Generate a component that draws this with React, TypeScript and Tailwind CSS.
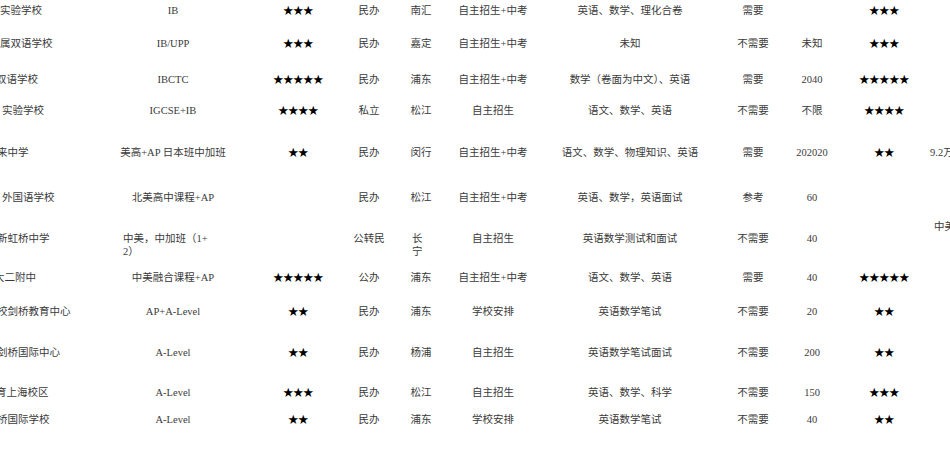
import React from "react";

type Row = {
  h: string;
  name: string;
  nameCls: string;
  course: React.ReactNode;
  courseCls?: string;
  stars: string;
  type: string;
  district: React.ReactNode;
  districtCls?: string;
  admit: string;
  subjects: string;
  interview: string;
  score: string;
  rating: string;
  extra?: string;
  extraCls?: string;
};

const ROWS: Row[] = [
  { h: "h-[33px]", name: "实验学校", nameCls: "ml-0", course: "IB", stars: "★★★", type: "民办", district: "南汇", admit: "自主招生+中考", subjects: "英语、数学、理化合卷", interview: "需要", score: "", rating: "★★★" },
  { h: "h-[36px]", name: "属双语学校", nameCls: "ml-0", course: "IB/UPP", stars: "★★★", type: "民办", district: "嘉定", admit: "自主招生+中考", subjects: "未知", interview: "不需要", score: "未知", rating: "★★★" },
  { h: "h-[31px]", name: "双语学校", nameCls: "-ml-[4px]", course: "IBCTC", stars: "★★★★★", type: "民办", district: "浦东", admit: "自主招生+中考", subjects: "数学（卷面为中文）、英语", interview: "需要", score: "2040", rating: "★★★★★" },
  { h: "h-[42px]", name: "实验学校", nameCls: "ml-[2px]", course: "IGCSE+IB", stars: "★★★★", type: "私立", district: "松江", admit: "自主招生", subjects: "语文、数学、英语", interview: "不需要", score: "不限", rating: "★★★★" },
  { h: "h-[45px]", name: "来中学", nameCls: "-ml-[3px]", course: "美高+AP 日本班中加班", stars: "★★", type: "民办", district: "闵行", admit: "自主招生+中考", subjects: "语文、数学、物理知识、英语", interview: "需要", score: "202020", rating: "★★", extra: "9.2万" },
  { h: "h-[41px]", name: "外国语学校", nameCls: "ml-[2px]", course: "北美高中课程+AP", stars: "", type: "民办", district: "松江", admit: "自主招生+中考", subjects: "英语、数学，英语面试", interview: "参考", score: "60", rating: "" },
  {
    h: "h-[39px]",
    name: "新虹桥中学",
    nameCls: "-ml-[3px]",
    course: (
      <>
        中美，中加班（1+
        <br />
        2）
      </>
    ),
    courseCls: "text-left pl-[5px]",
    stars: "",
    type: "公转民",
    district: (
      <>
        长
        <br />
        宁
      </>
    ),
    districtCls: "text-left pl-[3px]",
    admit: "自主招生",
    subjects: "英语数学测试和面试",
    interview: "不需要",
    score: "40",
    rating: "",
    extra: "中美",
    extraCls: "-mt-[12px] ml-[15px]",
  },
  { h: "h-[34px]", name: "大二附中", nameCls: "-ml-[6px]", course: "中美融合课程+AP", stars: "★★★★★", type: "公办", district: "浦东", admit: "自主招生+中考", subjects: "语文、数学、英语", interview: "需要", score: "40", rating: "★★★★★" },
  { h: "h-[41px]", name: "校剑桥教育中心", nameCls: "-ml-[3px]", course: "AP+A-Level", stars: "★★", type: "民办", district: "浦东", admit: "学校安排", subjects: "英语数学笔试", interview: "不需要", score: "20", rating: "★★" },
  { h: "h-[40px]", name: "剑桥国际中心", nameCls: "-ml-[3px]", course: "A-Level", stars: "★★", type: "民办", district: "杨浦", admit: "自主招生", subjects: "英语数学笔试面试", interview: "不需要", score: "200", rating: "★★" },
  { h: "h-[27px]", name: "育上海校区", nameCls: "-ml-[4px]", course: "A-Level", stars: "★★★", type: "民办", district: "松江", admit: "自主招生", subjects: "英语、数学、科学", interview: "不需要", score: "150", rating: "★★★" },
  { h: "h-[43px]", name: "桥国际学校", nameCls: "-ml-[3px]", course: "A-Level", stars: "★★", type: "民办", district: "浦东", admit: "学校安排", subjects: "英语数学笔试", interview: "不需要", score: "40", rating: "★★" },
];

function Stars({ value }: { value: string }) {
  return <span className="text-black tracking-[-0.5px]">{value}</span>;
}

function TableRow({ r }: { r: Row }) {
  return (
    <div className={`flex items-start shrink-0 ${r.h}`}>
      <div className="w-[112px] shrink-0 whitespace-nowrap overflow-visible">
        <div className={r.nameCls}>{r.name}</div>
      </div>
      <div className={`w-[110px] ml-[6px] shrink-0 whitespace-nowrap ${r.courseCls ?? "text-center"}`}>{r.course}</div>
      <div className="w-[70px] ml-[35px] shrink-0 text-center whitespace-nowrap">
        <Stars value={r.stars} />
      </div>
      <div className="w-[40px] ml-[16px] shrink-0 text-center whitespace-nowrap">{r.type}</div>
      <div className={`w-[24px] ml-[20px] shrink-0 whitespace-nowrap ${r.districtCls ?? "text-center"}`}>{r.district}</div>
      <div className="w-[100px] ml-[10px] shrink-0 text-center whitespace-nowrap">{r.admit}</div>
      <div className="w-[160px] ml-[7px] shrink-0 text-center whitespace-nowrap">{r.subjects}</div>
      <div className="w-[50px] ml-[18px] shrink-0 text-center whitespace-nowrap">{r.interview}</div>
      <div className="w-[44px] ml-[12px] shrink-0 text-center whitespace-nowrap">{r.score}</div>
      <div className="w-[70px] ml-[15px] shrink-0 text-center whitespace-nowrap">
        <Stars value={r.rating} />
      </div>
      {r.extra && (
        <div className={`shrink-0 whitespace-nowrap ${r.extraCls ?? "ml-[11px]"}`}>{r.extra}</div>
      )}
    </div>
  );
}

export default function App() {
  return (
    <div className="w-[950px] h-[462px] overflow-hidden bg-white text-[#3a3a3a] text-[10.5px] leading-[13px] font-['Liberation_Serif','Noto_Sans_CJK_SC',serif]">
      <div className="flex flex-col pt-[4px]">
        {ROWS.map((r, i) => (
          <TableRow key={i} r={r} />
        ))}
      </div>
    </div>
  );
}
